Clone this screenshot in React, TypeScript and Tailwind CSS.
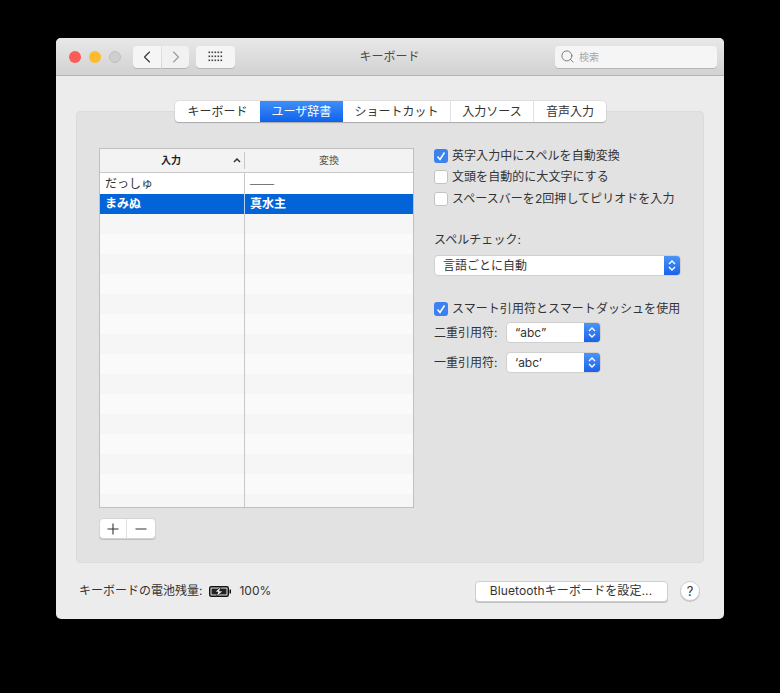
import React from 'react';
import { ChevronLeft, ChevronRight, Search } from 'lucide-react';

const FONT = "font-['Inter','Noto_Sans_CJK_JP',sans-serif]";

const TABS = ['キーボード', 'ユーザ辞書', 'ショートカット', '入力ソース', '音声入力'];
const TAB_WIDTHS = ['w-[85px]', 'w-[83px]', 'w-[107px]', 'w-[83px]', 'w-[73px]'];

const Updown = () => (
  <svg width="8" height="13" viewBox="0 0 8 13" fill="none" stroke="white" strokeWidth="1.4">
    <path d="M1 5 L4 2 L7 5" />
    <path d="M1 8 L4 11 L7 8" />
  </svg>
);

const Check: React.FC<{ label: string; checked?: boolean; className?: string }> = ({ label, checked, className }) => (
  <div className={`flex items-center h-[14px] ${className || ''}`}>
    {checked ? (
      <span className="w-[14px] h-[14px] rounded-[3px] bg-[#3b82f0] flex items-center justify-center shrink-0">
        <svg width="10" height="10" viewBox="0 0 10 10" fill="none" stroke="white" strokeWidth="1.5">
          <path d="M1.5 5.5 L4 8.5 L8.5 1.5" />
        </svg>
      </span>
    ) : (
      <span className="w-[14px] h-[14px] rounded-[3px] bg-white border border-[#c4c4c4] shrink-0" />
    )}
    <span className="ml-[4px] text-[12px] leading-none tracking-[0.05px] text-[#333] whitespace-nowrap">{label}</span>
  </div>
);

const Select: React.FC<{ label: string; className?: string; textClass?: string }> = ({ label, className, textClass }) => (
  <div className={`h-[21px] rounded-[4px] bg-white border border-[#cfcfcf] flex items-center justify-between overflow-hidden ${className || ''}`}>
    <span className={`text-[12px] leading-none text-[#333] ${textClass || ''}`}>{label}</span>
    <span className="w-[16px] h-full bg-gradient-to-b from-[#4b94f7] to-[#1a62ea] flex items-center justify-center">
      <Updown />
    </span>
  </div>
);

const App: React.FC = () => {
  const stripes = Array.from({ length: 15 });

  return (
    <div className={`w-[780px] h-[693px] bg-black pt-[38px] pl-[56px] ${FONT}`}>
      <div className="w-[668px] h-[581px] rounded-[5px] overflow-hidden bg-[#ececec] flex flex-col">
        {/* title bar */}
        <div className="h-[38px] shrink-0 flex items-center bg-gradient-to-b from-[#e8e8e8] to-[#d2d2d2] border-b border-[#b4b4b4] pl-[13px] pr-[7px]">
          <span className="w-[12px] h-[12px] rounded-full bg-[#fc5b57]" />
          <span className="w-[12px] h-[12px] rounded-full bg-[#fdbc2e] ml-[8px]" />
          <span className="w-[12px] h-[12px] rounded-full bg-[#cfcfcf] border border-[#c0c0c0] ml-[8px]" />
          <div className="flex ml-[12px] gap-px">
            <span className="w-[28px] h-[22px] rounded-l-[4px] bg-[#f5f5f5] shadow-[0_1px_0_#b5b5b5] flex items-center justify-center">
              <ChevronLeft size={20} strokeWidth={1.4} className="text-[#3a3a3a]" />
            </span>
            <span className="w-[27px] h-[22px] rounded-r-[4px] bg-[#f1f1f1] shadow-[0_1px_0_#b5b5b5] flex items-center justify-center">
              <ChevronRight size={20} strokeWidth={1.4} className="text-[#9c9c9c]" />
            </span>
          </div>
          <span className="w-[39px] h-[22px] ml-[7px] rounded-[4px] bg-[#f5f5f5] shadow-[0_1px_0_#b5b5b5] flex items-center justify-center">
            <svg width="15" height="11" viewBox="0 0 15 11" fill="#444">
              {[0, 4, 8].map((y) =>
                [0, 3, 6, 9, 12].map((x) => <rect key={`${x}-${y}`} x={x + 0.5} y={y + 0.5} width="1.6" height="1.6" />)
              )}
            </svg>
          </span>
          <div className="flex-1 text-center text-[12px] leading-none text-[#4a4a4a] pr-[11px] pt-[1px]">キーボード</div>
          <div className="w-[162px] h-[22px] rounded-[4px] bg-[#f5f5f5] shadow-[0_1px_0_#b5b5b5] flex items-center pl-[5px]">
            <Search size={15} strokeWidth={1.3} className="text-[#666]" />
            <span className="ml-[4px] text-[10px] leading-none text-[#a8a8a8]">検索</span>
          </div>
        </div>

        {/* body */}
        <div className="flex-1 flex flex-col px-[20px] pt-[25px]">
          <div className="flex justify-center relative z-10 h-[21px] pl-[1px]">
            <div className="flex h-[21px] rounded-[4px] bg-white shadow-[0_1px_1px_#aaaaaa,0_0_0_0.5px_#cfcfcf] overflow-hidden">
              {TABS.map((t, i) => (
                <div
                  key={t}
                  className={`${TAB_WIDTHS[i]} flex items-center justify-center text-[12px] leading-none ${
                    i === 1
                      ? 'bg-gradient-to-b from-[#3f8ef9] to-[#0e62ec] text-white'
                      : `text-[#333] ${i > 2 ? 'border-l border-[#e2e2e2]' : ''}`
                  }`}
                >
                  {t}
                </div>
              ))}
            </div>
          </div>

          <div className="-mt-[11px] h-[452px] rounded-[4px] bg-[#e2e2e2] border border-[#dcdcdc] pt-[36px] pl-[22px] flex">
            {/* left column */}
            <div className="w-[315px] shrink-0">
              <div className="w-[315px] h-[360px] border border-[#c0c0c0] bg-white flex flex-col overflow-hidden">
                <div className="h-[24px] shrink-0 flex bg-[#f3f3f3] border-b border-[#c8c8c8] text-[10px] leading-none">
                  <div className="w-[144px] relative flex items-center justify-center text-[#222] font-bold pr-[2px] pb-[2px]">
                    入力
                    <svg className="absolute right-[3px] top-[9px]" width="8" height="5" viewBox="0 0 8 5" fill="none" stroke="#333" strokeWidth="1.5">
                      <path d="M1 4 L4 1 L7 4" />
                    </svg>
                  </div>
                  <div className="flex-1 border-l border-[#c8c8c8] my-[3px] pb-[2px] flex items-center justify-center text-[#555]">変換</div>
                </div>
                <div className="h-[21px] shrink-0 flex items-center text-[12px] leading-none text-[#333]">
                  <div className="w-[144px] pl-[5px] h-full flex items-center">だっしゅ</div>
                  <div className="flex-1 h-full border-l border-[#c8c8c8] pl-[5px] flex items-center text-[#777]">——</div>
                </div>
                <div className="h-[20px] shrink-0 flex items-center text-[12px] leading-none font-bold text-white bg-[#0364d8]">
                  <div className="w-[144px] pl-[5px] h-full flex items-center">まみぬ</div>
                  <div className="flex-1 h-full border-l border-[#b8cff0] pl-[5px] flex items-center">真水主</div>
                </div>
                {stripes.map((_, i) => (
                  <div key={i} className={`h-[20px] shrink-0 flex ${i % 2 === 0 ? 'bg-[#f6f6f6]' : 'bg-[#fafafa]'}`}>
                    <div className="w-[144px]" />
                    <div className="flex-1 border-l border-[#c8c8c8]" />
                  </div>
                ))}
              </div>

              <div className="mt-[10px] w-[57px] h-[21px] flex rounded-[4px] bg-white border border-[#d4d4d4] shadow-[0_1px_0_#c0c0c0]">
                <span className="w-[27px] h-full border-r border-[#e0e0e0] flex items-center justify-center">
                  <svg width="12" height="12" viewBox="0 0 12 12" stroke="#333" strokeWidth="1.1"><path d="M6 0.5 V11.5 M0.5 6 H11.5" /></svg>
                </span>
                <span className="flex-1 flex items-center justify-center">
                  <svg width="12" height="12" viewBox="0 0 12 12" stroke="#333" strokeWidth="1.1"><path d="M0.5 6 H11.5" /></svg>
                </span>
              </div>
            </div>

            {/* right column */}
            <div className="ml-[20px] flex-1">
              <Check checked label="英字入力中にスペルを自動変換" className="mt-[1px]" />
              <Check label="文頭を自動的に大文字にする" className="mt-[7px]" />
              <Check label="スペースバーを2回押してピリオドを入力" className="mt-[8px]" />
              <div className="mt-[28px] text-[12px] leading-none tracking-[0.05px] text-[#333]">スペルチェック:</div>
              <Select label="言語ごとに自動" className="mt-[9px] w-[247px] pl-[8px]" />
              <Check checked label="スマート引用符とスマートダッシュを使用" className="mt-[26px]" />
              <div className="mt-[6px] flex items-center h-[21px]">
                <span className="w-[72px] text-[12px] leading-none text-[#333]">二重引用符:</span>
                <Select label="“abc”" className="w-[95px] pl-[8px]" />
              </div>
              <div className="mt-[9px] flex items-center h-[21px]">
                <span className="w-[72px] text-[12px] leading-none text-[#333]">一重引用符:</span>
                <Select label="‘abc’" className="w-[95px] pl-[8px]" />
              </div>
            </div>
          </div>

          {/* footer */}
          <div className="mt-[17px] h-[22px] flex items-center pl-[3px] pr-[4px]">
            <span className="text-[12px] leading-none text-[#333]">キーボードの電池残量:</span>
            <svg className="ml-[7px]" width="22" height="11" viewBox="0 0 22 11">
              <rect x="0.75" y="0.75" width="18.5" height="9.5" rx="1.5" fill="none" stroke="#111" strokeWidth="1.5" />
              <rect x="20.5" y="3.5" width="1.5" height="4" fill="#111" />
              <rect x="2.5" y="2.5" width="15" height="6" fill="#222" />
              <path d="M12.5 0 L6 6 H9 L7 11 L14 5 H10.5 Z" fill="#f4f4f4" stroke="#111" strokeWidth="0.7" />
            </svg>
            <span className="ml-[8px] text-[12px] leading-none text-[#333]">100%</span>
            <div className="ml-auto w-[193px] h-[21px] rounded-[4px] bg-white border border-[#cfcfcf] shadow-[0_1px_0_#c0c0c0] flex items-center justify-center text-[12px] leading-none tracking-[0.1px] text-[#333] pr-[1px]">
              Bluetoothキーボードを設定...
            </div>
            <div className="ml-[12px] w-[20px] h-[20px] rounded-full bg-white border border-[#cfcfcf] shadow-[0_1px_0_#c0c0c0] flex items-center justify-center text-[13px] leading-none text-[#333]">
              ?
            </div>
          </div>
        </div>
      </div>
    </div>
  );
};

export default App;
